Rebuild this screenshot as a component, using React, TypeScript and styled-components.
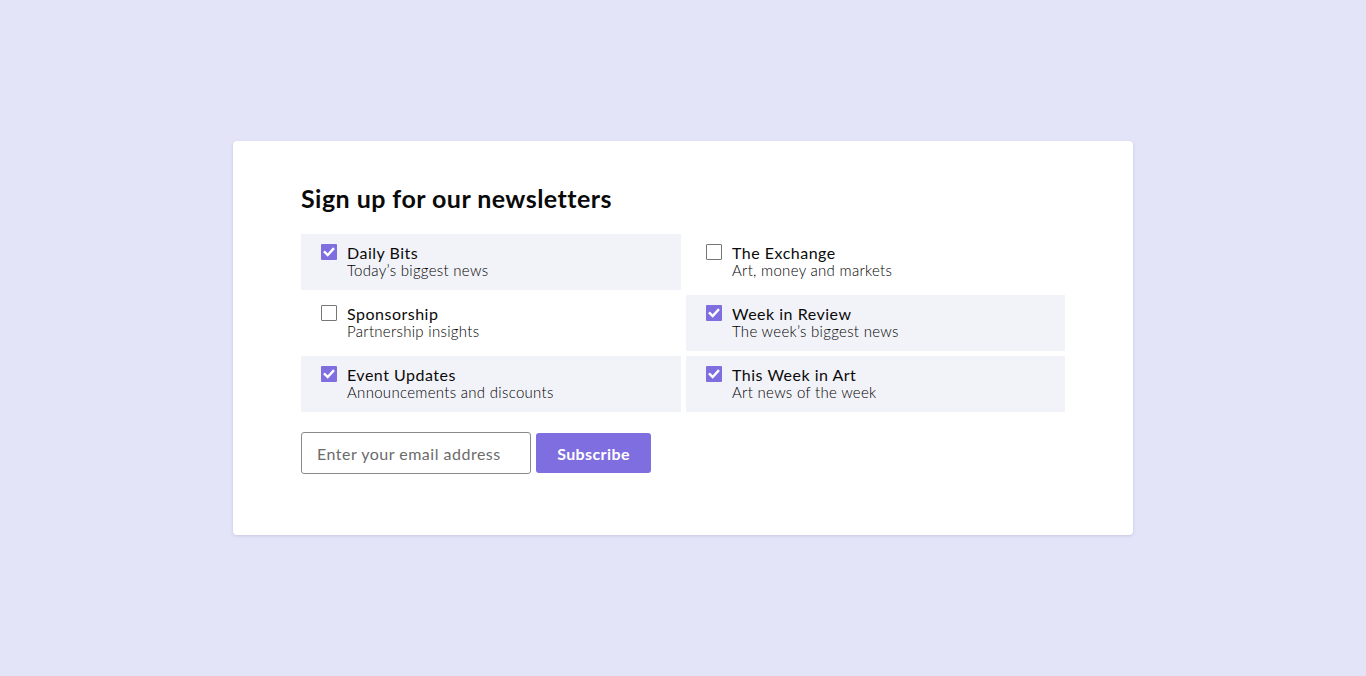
import React, { useState } from "react";
import styled, { createGlobalStyle } from "styled-components";

const Global = createGlobalStyle`
  html, body { margin: 0; padding: 0; }
  body {
    background: #e3e4f7;
    font-family: Lato, "Noto Sans", sans-serif;
    color: #111;
  }
`;

const Page = styled.div`
  min-height: 676px;
  display: flex;
  justify-content: center;
  padding-top: 141px;
  box-sizing: border-box;
`;

const Card = styled.div`
  width: 900px;
  height: 394px;
  box-sizing: border-box;
  background: #fff;
  border-radius: 4px;
  box-shadow: 0 1px 3px rgba(80, 80, 140, 0.18);
  padding: 41px 68px 0 68px;
`;

const Title = styled.h1`
  margin: 0 0 20px 0;
  font-size: 25px;
  font-weight: 700;
  line-height: 32px;
  letter-spacing: 0.45px;
  color: #0a0a0a;
`;

const Grid = styled.div`
  display: grid;
  grid-template-columns: 380px 379px;
  grid-auto-rows: 56px;
  gap: 5px;
`;

const Option = styled.label<{ $checked: boolean }>`
  display: flex;
  align-items: flex-start;
  gap: 10px;
  padding: 10px 20px;
  box-sizing: border-box;
  background: ${(p) => (p.$checked ? "#f2f3f9" : "transparent")};
  cursor: pointer;
`;

const Box = styled.span<{ $checked: boolean }>`
  flex: none;
  width: 16px;
  height: 16px;
  box-sizing: border-box;
  border: ${(p) => (p.$checked ? "none" : "1px solid #767676")};
  background: ${(p) => (p.$checked ? "#7f6ee0" : "#fff")};
  border-radius: 1px;
  display: flex;
  align-items: center;
  justify-content: center;
`;

const Texts = styled.div`
  display: flex;
  flex-direction: column;
`;

const Name = styled.span`
  font-size: 16px;
  line-height: 18px;
  font-weight: 400;
  letter-spacing: 0.5px;
  color: #0a0a0a;
`;

const Desc = styled.span`
  font-size: 15px;
  line-height: 16px;
  font-weight: 300;
  letter-spacing: 0.3px;
  color: #000;
`;

const Form = styled.form`
  display: flex;
  align-items: center;
  gap: 5px;
  margin-top: 20px;
`;

const Input = styled.input`
  width: 230px;
  height: 42px;
  box-sizing: border-box;
  border: 1px solid #8a8a8a;
  border-radius: 3px;
  padding: 0 15px;
  font-family: inherit;
  font-size: 16px;
  letter-spacing: 0.5px;
  color: #111;
  outline: none;
  &::placeholder { color: #6b6b6b; }
`;

const Button = styled.button`
  width: 115px;
  height: 40px;
  border: none;
  border-radius: 3px;
  background: #7f6ee0;
  color: #fff;
  font-family: inherit;
  font-size: 16px;
  font-weight: 700;
  letter-spacing: 0.4px;
  cursor: pointer;
`;

const Check = () => (
  <svg width="12" height="12" viewBox="0 0 12 12">
    <path d="M1.8 6.2 L4.7 9 L10.2 3" fill="none" stroke="#fff" strokeWidth="2.4" strokeLinecap="square" strokeLinejoin="miter" />
  </svg>
);

const items = [
  { name: "Daily Bits", desc: "Today’s biggest news", checked: true },
  { name: "The Exchange", desc: "Art, money and markets", checked: false },
  { name: "Sponsorship", desc: "Partnership insights", checked: false },
  { name: "Week in Review", desc: "The week’s biggest news", checked: true },
  { name: "Event Updates", desc: "Announcements and discounts", checked: true },
  { name: "This Week in Art", desc: "Art news of the week", checked: true },
];

export default function App() {
  const [state, setState] = useState(items.map((i) => i.checked));
  return (
    <>
      <Global />
      <Page>
        <Card>
          <Title>Sign up for our newsletters</Title>
          <Grid>
            {items.map((it, i) => (
              <Option
                key={it.name}
                $checked={state[i]}
                onClick={() => setState((s) => s.map((v, j) => (j === i ? !v : v)))}
              >
                <Box $checked={state[i]}>{state[i] && <Check />}</Box>
                <Texts>
                  <Name>{it.name}</Name>
                  <Desc>{it.desc}</Desc>
                </Texts>
              </Option>
            ))}
          </Grid>
          <Form onSubmit={(e) => e.preventDefault()}>
            <Input placeholder="Enter your email address" />
            <Button type="submit">Subscribe</Button>
          </Form>
        </Card>
      </Page>
    </>
  );
}
